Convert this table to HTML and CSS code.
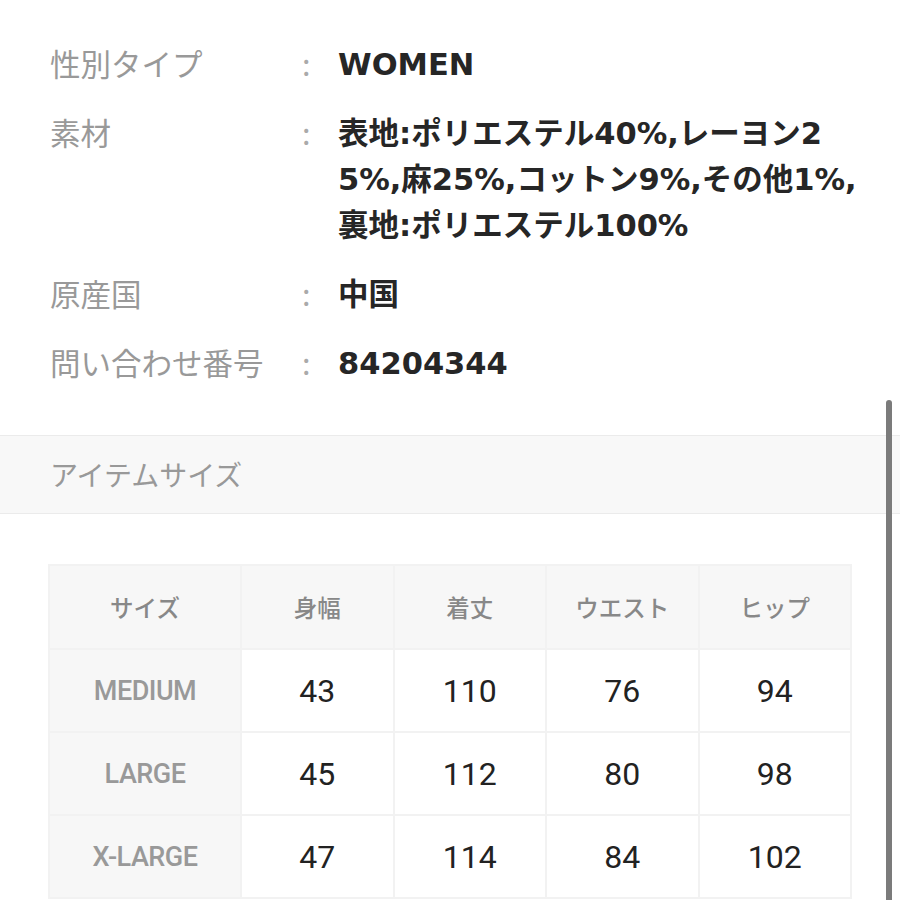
FILE: index.html
```html
<!DOCTYPE html>
<html lang="ja">
<head>
<meta charset="utf-8">
<link rel="stylesheet" href="styles.css">
</head>
<body>
<div class="page">
  <dl class="spec">
    <dt>性別タイプ</dt><dd class="colon">:</dd><dd class="val">WOMEN</dd>
    <dt>素材</dt><dd class="colon">:</dd><dd class="val">表地:ポリエステル40%,レーヨン2<br>5%,麻25%,コットン9%,その他1%,<br>裏地:ポリエステル100%</dd>
    <dt>原産国</dt><dd class="colon">:</dd><dd class="val">中国</dd>
    <dt>問い合わせ番号</dt><dd class="colon">:</dd><dd class="val">84204344</dd>
  </dl>
  <div class="section-head">アイテムサイズ</div>
  <div class="table-wrap">
    <table class="size">
      <thead>
        <tr><th>サイズ</th><th>身幅</th><th>着丈</th><th>ウエスト</th><th>ヒップ</th></tr>
      </thead>
      <tbody>
        <tr><th>MEDIUM</th><td>43</td><td>110</td><td>76</td><td>94</td></tr>
        <tr><th>LARGE</th><td>45</td><td>112</td><td>80</td><td>98</td></tr>
        <tr><th>X-LARGE</th><td>47</td><td>114</td><td>84</td><td>102</td></tr>
      </tbody>
    </table>
  </div>
  <div class="scrollbar"></div>
</div>
</body>
</html>
```

FILE: styles.css
```css
html, body {
  margin: 0;
  padding: 0;
  background: #fff;
}
body {
  font-family: "Noto Sans CJK JP", "Noto Sans", sans-serif;
  color: #222;
}
.page {
  position: relative;
  width: 900px;
  height: 900px;
  overflow: hidden;
}
.spec {
  margin: 0;
  padding: 40px 0 0 50px;
  display: grid;
  grid-template-columns: 252px 36px 1fr;
  row-gap: 23px;
  font-size: 30.5px;
  line-height: 46px;
}
.spec dt {
  color: #999;
  font-weight: 400;
}
.spec dd {
  margin: 0;
}
.spec .colon {
  color: #aaa;
  font-weight: 400;
}
.spec .val {
  font-family: "DejaVu Sans", "Noto Sans CJK JP", sans-serif;
  font-weight: 700;
  font-size: 30.5px;
  color: #262626;
  padding-top: 2px;
  margin-bottom: -2px;
}
.section-head {
  margin-top: 50px;
  height: 77px;
  border-top: 1px solid #ebebeb;
  border-bottom: 1px solid #ebebeb;
  background: #f8f8f8;
  color: #999;
  font-size: 28px;
  line-height: 77px;
  padding-left: 50px;
}
.table-wrap {
  padding: 50px 48px 0 48px;
}
.size {
  width: 804px;
  border-collapse: separate;
  border-spacing: 2px;
  background: #f2f2f2;
  table-layout: fixed;
}
.size th, .size td {
  height: 81px;
  padding: 0;
  text-align: center;
  vertical-align: middle;
}
.size thead th {
  background: #f7f7f7;
  color: #888;
  font-size: 23.5px;
  font-weight: 500;
  height: 82px;
}
.size thead th:first-child,
.size tbody th {
  width: 190px;
}
.size tbody th {
  background: #f7f7f7;
  color: #999;
  font-family: Roboto, "Noto Sans", sans-serif;
  font-size: 27px;
  font-weight: 500;
  letter-spacing: -0.5px;
}
.size td {
  background: #fff;
  color: #222;
  font-family: Roboto, "Noto Sans", sans-serif;
  font-size: 32px;
  font-weight: 400;
}
.scrollbar {
  position: absolute;
  left: 886px;
  top: 400px;
  width: 6px;
  height: 520px;
  border-radius: 3px;
  background: #7b7b7b;
}
```
